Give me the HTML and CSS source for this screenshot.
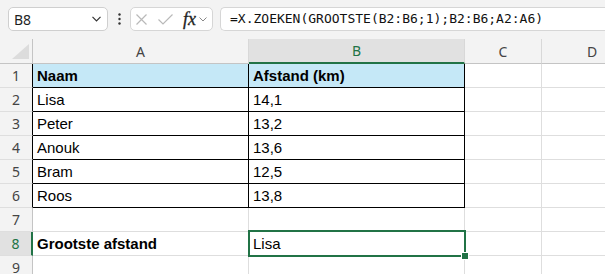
FILE: index.html
```html
<!DOCTYPE html>
<html lang="nl">
<head>
    <meta charset="UTF-8">
    <title>Grootste afstand</title>
    <link rel="stylesheet" href="styles.css">
</head>
<body>
    <div class="toolbar">
        <div class="namebox">
            <span>B8</span>
            <svg width="9" height="6" viewBox="0 0 9 6"><path d="M0.5 0.8 L4.5 4.8 L8.5 0.8" fill="none" stroke="#333" stroke-width="1.2"/></svg>
        </div>
        <div class="more">
            <svg width="3" height="12" viewBox="0 0 3 12"><circle cx="1.5" cy="1.5" r="1.2" fill="#333"/><circle cx="1.5" cy="6" r="1.2" fill="#333"/><circle cx="1.5" cy="10.5" r="1.2" fill="#333"/></svg>
        </div>
        <div class="fxbox">
            <svg class="ico-x" width="11" height="11" viewBox="0 0 11 11"><path d="M0.5 0.5 L10.5 10.5 M10.5 0.5 L0.5 10.5" stroke="#b9b9b9" stroke-width="1.2"/></svg>
            <svg class="ico-check" width="15" height="11" viewBox="0 0 15 11"><path d="M0.5 5.5 L5 10 L14.5 0.5" fill="none" stroke="#b9b9b9" stroke-width="1.2"/></svg>
            <span class="fx">fx</span>
            <svg class="ico-down" width="8" height="5" viewBox="0 0 8 5"><path d="M0.5 0.5 L4 4 L7.5 0.5" fill="none" stroke="#888" stroke-width="1"/></svg>
        </div>
        <div class="formula">=X.ZOEKEN(GROOTSTE(B2:B6;1);B2:B6;A2:A6)</div>
    </div>

    <table class="sheet">
        <colgroup>
            <col class="col-rh"><col class="col-a"><col class="col-b"><col class="col-c"><col class="col-d">
        </colgroup>
        <thead>
            <tr>
                <th class="corner"><svg width="17" height="15" viewBox="0 0 17 15"><path d="M17 0 L17 15 L0 15 Z" fill="#dcdcdc"/></svg></th>
                <th>A</th>
                <th class="active">B</th>
                <th>C</th>
                <th>D</th>
            </tr>
        </thead>
        <tbody>
            <tr class="boxed title">
                <th>1</th><td>Naam</td><td>Afstand (km)</td><td></td><td></td>
            </tr>
            <tr class="boxed">
                <th>2</th><td>Lisa</td><td>14,1</td><td></td><td></td>
            </tr>
            <tr class="boxed">
                <th>3</th><td>Peter</td><td>13,2</td><td></td><td></td>
            </tr>
            <tr class="boxed">
                <th>4</th><td>Anouk</td><td>13,6</td><td></td><td></td>
            </tr>
            <tr class="boxed">
                <th>5</th><td>Bram</td><td>12,5</td><td></td><td></td>
            </tr>
            <tr class="boxed">
                <th>6</th><td>Roos</td><td>13,8</td><td></td><td></td>
            </tr>
            <tr>
                <th>7</th><td></td><td></td><td></td><td></td>
            </tr>
            <tr>
                <th class="active">8</th><td class="bold">Grootste afstand</td><td class="selected">Lisa<div class="sel-box"><div class="handle"></div></div></td><td></td><td></td>
            </tr>
            <tr>
                <th>9</th><td></td><td></td><td></td><td></td>
            </tr>
        </tbody>
    </table>
</body>
</html>
```

FILE: styles.css
```css
:root {
    --excel-green: #217346;
    --grid: #dedede;
    --head-bg: #f3f3f3;
    --head-line: #c4c4c4;
}

body {
    margin: 0;
    width: 605px;
    height: 274px;
    overflow: hidden;
    background: var(--head-bg);
    font-family: "Liberation Sans", Arial, sans-serif;
}

/* formula bar */

.toolbar {
    display: flex;
    align-items: flex-start;
    height: 39px;
    padding: 7px 0 0 8px;
    box-sizing: border-box;
}

.namebox {
    width: 100px;
    height: 24px;
    box-sizing: border-box;
    border: 1px solid #cfcfcf;
    border-radius: 5px;
    background: #fff;
    display: flex;
    align-items: center;
    justify-content: space-between;
    padding: 0 6px 0 5px;
    font: 14px "Noto Sans", sans-serif;
    color: #1f1f1f;
}

.more {
    width: 22px;
    height: 24px;
    display: flex;
    align-items: center;
    justify-content: center;
}

.fxbox {
    width: 83px;
    height: 24px;
    box-sizing: border-box;
    border: 1px solid #d6d6d6;
    border-radius: 5px;
    background: #fff;
    display: flex;
    align-items: center;
    padding-left: 5px;
}

.ico-check {
    margin-left: 11px;
}

.fx {
    margin-left: 10px;
    font: italic 18px "Liberation Serif", serif;
    color: #222;
    line-height: 20px;
    -webkit-text-stroke: 0.3px #222;
}

.ico-down {
    margin-left: 3px;
}

.formula {
    flex: 1;
    margin-left: 7px;
    height: 24px;
    box-sizing: border-box;
    border: 1px solid #d6d6d6;
    border-right: none;
    border-radius: 5px 0 0 5px;
    background: #fff;
    padding-left: 9px;
    font: 13px "DejaVu Sans Mono", monospace;
    line-height: 22px;
    color: #111;
    white-space: nowrap;
    overflow: hidden;
}

/* grid */

.sheet {
    border-collapse: separate;
    border-spacing: 0;
    table-layout: fixed;
    width: 605px;
    background: #fff;
}

.col-rh { width: 33px; }
.col-a { width: 216px; }
.col-b { width: 216px; }
.col-c { width: 77px; }
.col-d { width: 63px; }

.sheet th {
    background: var(--head-bg);
    font: normal 14px "Noto Sans", sans-serif;
    color: #444;
    padding: 0;
    text-align: center;
}

.sheet thead th {
    height: 23px;
    line-height: 23px;
    border-right: 1px solid #d8d8d8;
    border-bottom: 1px solid var(--head-line);
}

.sheet thead th:last-child {
    border-right: none;
    text-indent: 37px;
}

.sheet thead th.corner {
    border-right-color: var(--head-line);
    text-align: right;
    vertical-align: bottom;
    line-height: 0;
}

.corner svg {
    margin: 0 3px 4px 0;
}

.sheet tbody th {
    height: 23px;
    line-height: 22px;
    padding-top: 1px;
    box-sizing: border-box;
    border-right: 1px solid var(--head-line);
    border-bottom: 1px solid var(--grid);
}

.sheet th.active {
    background: #e1e1e1;
    color: var(--excel-green);
}

.sheet thead th.active {
    height: 22px;
    border-bottom: 2px solid var(--excel-green);
}

.sheet tbody th.active {
    border-right: 2px solid var(--excel-green);
}

.sheet td {
    height: 23px;
    padding: 0 4px;
    line-height: 23px;
    font-size: 15px;
    color: #000;
    border-right: 1px solid var(--grid);
    border-bottom: 1px solid var(--grid);
    white-space: nowrap;
    overflow: hidden;
    vertical-align: bottom;
}

.sheet td:last-child {
    border-right: none;
}

.boxed th {
    border-right-color: #000 !important;
}

.boxed td:nth-child(2),
.boxed td:nth-child(3) {
    border-right-color: #000;
    border-bottom-color: #000;
}

.title td:nth-child(2),
.title td:nth-child(3) {
    background: #c5e8f7;
    font-weight: bold;
}

.bold {
    font-weight: bold;
}

.sheet td.selected {
    position: relative;
    overflow: visible;
}

.sel-box {
    position: absolute;
    top: -2px;
    left: -1px;
    right: -2px;
    bottom: -2px;
    border: 2px solid var(--excel-green);
    pointer-events: none;
}

.handle {
    position: absolute;
    right: -4px;
    bottom: -4px;
    width: 6px;
    height: 6px;
    background: var(--excel-green);
    box-shadow: 0 0 0 1px #fff;
}
```
